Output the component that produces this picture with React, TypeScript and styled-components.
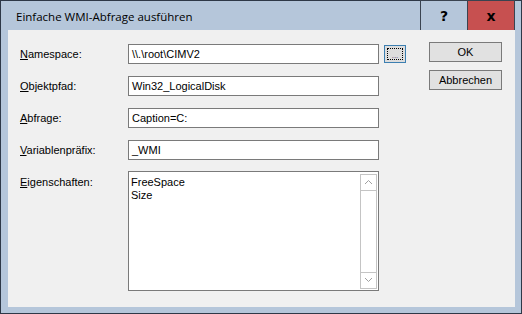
import React from 'react';
import styled, { createGlobalStyle } from 'styled-components';

const GlobalStyle = createGlobalStyle`
  html, body {
    margin: 0;
    padding: 0;
    background: #ffffff;
  }
  * {
    box-sizing: border-box;
  }
`;

const Window = styled.div`
  width: 522px;
  height: 314px;
  border: 1px solid #2e3847;
  background: #b5c6da;
  display: flex;
  flex-direction: column;
  font-family: 'Liberation Sans', Arial, sans-serif;
  font-size: 11px;
  color: #000;
`;

const TitleBar = styled.div`
  height: 30px;
  display: flex;
  align-items: stretch;
  padding-right: 6px;
  margin-top: -1px;
`;

const Title = styled.div`
  flex: 1;
  display: flex;
  align-items: center;
  padding-left: 15px;
  padding-top: 2px;
  font-family: 'Open Sans', 'Noto Sans', sans-serif;
  font-size: 11.5px;
  color: #000;
`;

const CaptionButton = styled.div<{ $close?: boolean }>`
  width: ${(p) => (p.$close ? '47px' : '48px')};
  height: 31px;
  border: 1px solid #3a4350;
  border-left-width: ${(p) => (p.$close ? '0' : '1px')};
  background: ${(p) => (p.$close ? '#c75050' : '#b5c6da')};
  display: flex;
  align-items: center;
  justify-content: center;
  font-family: 'DejaVu Sans', sans-serif;
  font-weight: 900;
  font-size: 14px;
  color: #000;
`;

const Content = styled.div`
  flex: 1;
  margin: 0 6px 6px 7px;
  background: #f0f0f0;
  display: flex;
  padding: 14px 0 0 12px;
  gap: 23px;
`;

const Form = styled.div`
  display: grid;
  grid-template-columns: 108px 251px 27px;
  grid-auto-rows: 20px;
  row-gap: 12px;
  align-items: center;
`;

const Label = styled.label<{ $top?: boolean }>`
  align-self: ${(p) => (p.$top ? 'start' : 'center')};
  padding-top: ${(p) => (p.$top ? '4px' : '0')};
  grid-column: 1;
  white-space: nowrap;
  u {
    text-decoration: underline;
  }
`;

const TextBox = styled.div`
  grid-column: 2;
  height: 20px;
  border: 1px solid #7a7a7a;
  background: #fff;
  padding: 0 3px;
  display: flex;
  align-items: center;
  white-space: nowrap;
`;

const BrowseButton = styled.div`
  grid-column: 3;
  margin-left: 5px;
  width: 22px;
  height: 18px;
  border: 1px solid #3c7fb1;
  background: #dddddd;
  padding: 2px;
  align-self: start;
  margin-top: 1px;
`;

const FocusRect = styled.div`
  width: 100%;
  height: 100%;
  border: 1px dotted #000;
  display: flex;
  align-items: flex-end;
  justify-content: center;
  font-size: 8px;
  line-height: 6px;
  color: #553377;
`;

const ListBox = styled.div`
  grid-column: 2;
  grid-row: span 4;
  margin-top: 1px;
  height: 120px;
  border: 1px solid #7a7a7a;
  background: #fff;
  display: flex;
  padding: 1px 1px 1px 0;
`;

const ListItems = styled.div`
  flex: 1;
  padding: 3px 0 0 2px;
  line-height: 13px;
`;

const ScrollBar = styled.div`
  width: 17px;
  border: 1px solid #c4c4c4;
  display: flex;
  flex-direction: column;
  justify-content: space-between;
  margin-top: 1px;
`;

const ScrollArrow = styled.div<{ $down?: boolean }>`
  height: 16px;
  border-${(p) => (p.$down ? 'top' : 'bottom')}: 1px solid #c4c4c4;
  display: flex;
  align-items: center;
  justify-content: center;
`;

const ButtonColumn = styled.div`
  display: flex;
  flex-direction: column;
  gap: 8px;
  margin-top: -2px;
`;

const DialogButton = styled.div`
  width: 73px;
  height: 20px;
  border: 1px solid #7a7a7a;
  background: #e1e1e1;
  display: flex;
  align-items: center;
  justify-content: center;
  font-size: 11px;
`;

const Chevron = ({ down }: { down?: boolean }) => (
  <svg width="9" height="6" viewBox="0 0 9 6">
    <path
      d={down ? 'M1 1 L4.5 4.5 L8 1' : 'M1 5 L4.5 1.5 L8 5'}
      fill="none"
      stroke="#a0a0a0"
      strokeWidth="1"
    />
  </svg>
);

function App() {
  return (
    <>
      <GlobalStyle />
      <Window>
        <TitleBar>
          <Title>Einfache WMI-Abfrage ausführen</Title>
          <CaptionButton>?</CaptionButton>
          <CaptionButton $close>x</CaptionButton>
        </TitleBar>
        <Content>
          <Form>
            <Label>
              <u>N</u>amespace:
            </Label>
            <TextBox>\\.\root\CIMV2</TextBox>
            <BrowseButton>
              <FocusRect>...</FocusRect>
            </BrowseButton>

            <Label>
              <u>O</u>bjektpfad:
            </Label>
            <TextBox>Win32_LogicalDisk</TextBox>
            <span />

            <Label>
              <u>A</u>bfrage:
            </Label>
            <TextBox>Caption=C:</TextBox>
            <span />

            <Label>
              <u>V</u>ariablenpräfix:
            </Label>
            <TextBox>_WMI</TextBox>
            <span />

            <Label $top>
              <u>E</u>igenschaften:
            </Label>
            <ListBox>
              <ListItems>
                <div>FreeSpace</div>
                <div>Size</div>
              </ListItems>
              <ScrollBar>
                <ScrollArrow>
                  <Chevron />
                </ScrollArrow>
                <ScrollArrow $down>
                  <Chevron down />
                </ScrollArrow>
              </ScrollBar>
            </ListBox>
          </Form>
          <ButtonColumn>
            <DialogButton>OK</DialogButton>
            <DialogButton>Abbrechen</DialogButton>
          </ButtonColumn>
        </Content>
      </Window>
    </>
  );
}

export default App;
